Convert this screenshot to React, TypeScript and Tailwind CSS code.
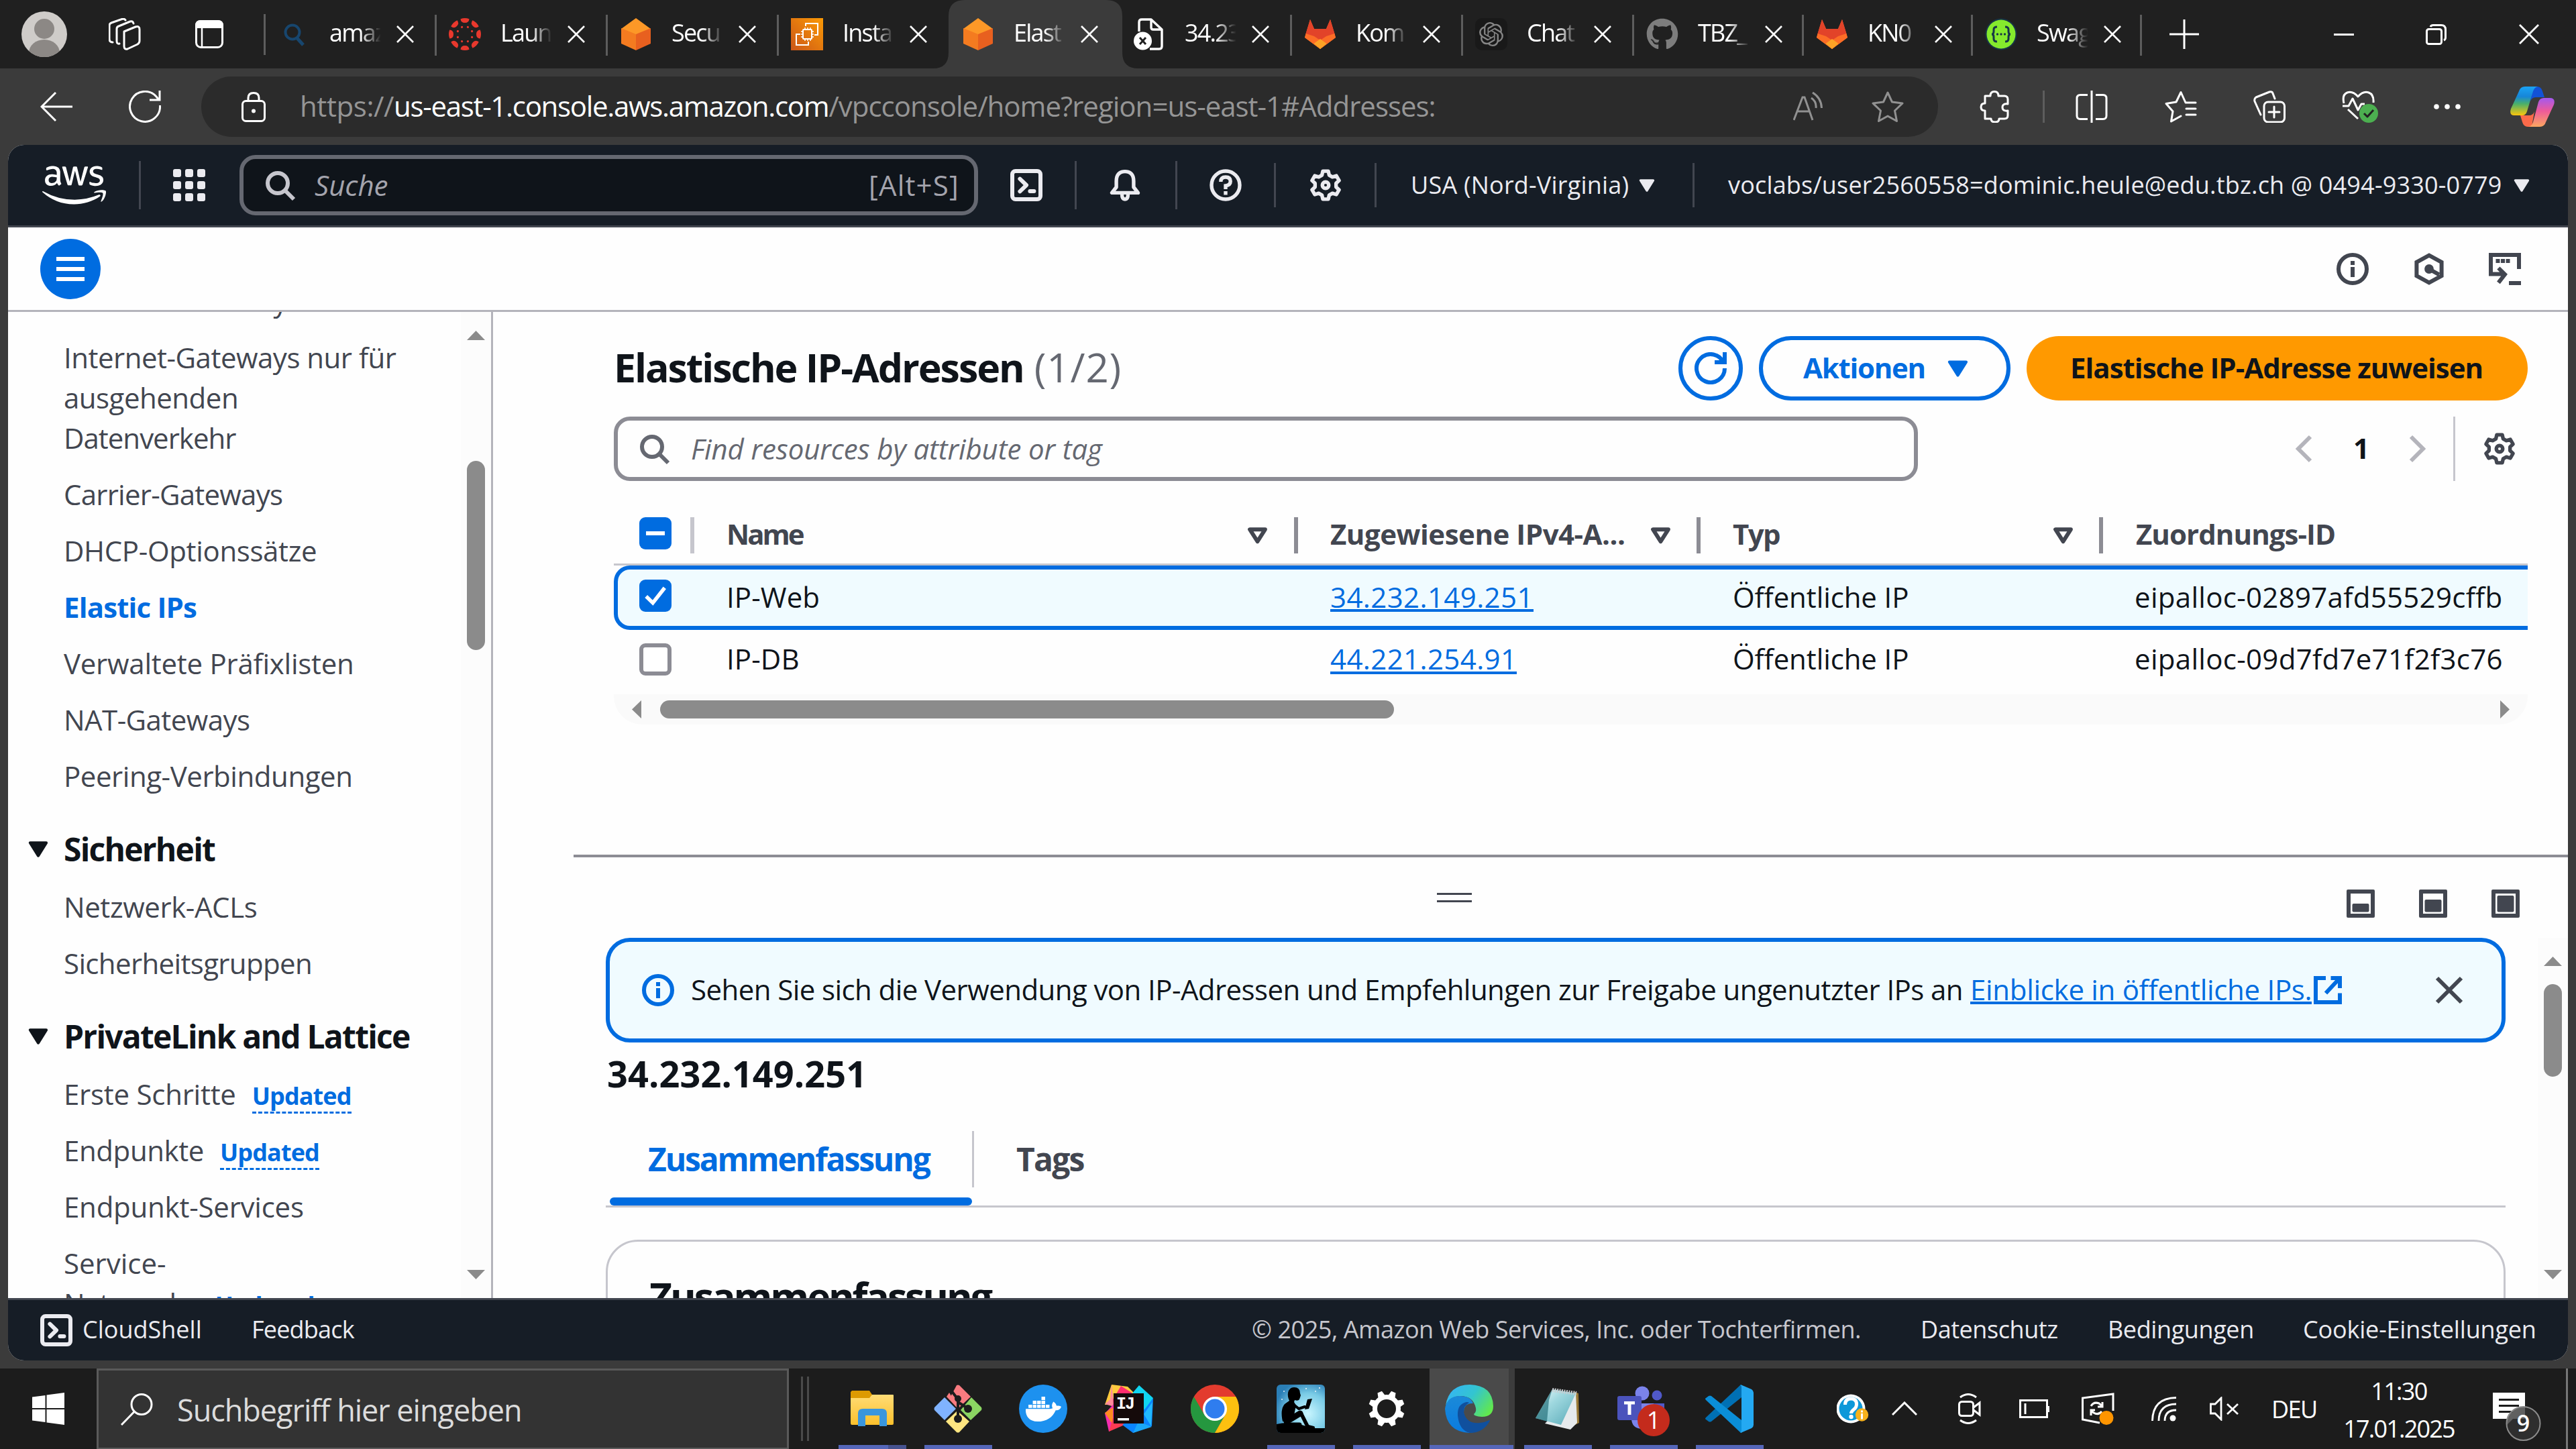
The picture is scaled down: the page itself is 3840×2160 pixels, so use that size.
import type { ReactNode } from 'react';
import { FaAws, FaDocker, FaGithub } from 'react-icons/fa';
import { SiOpenai } from 'react-icons/si';

type P = { className?: string };

/* ---------- shared helpers ---------- */

function Line({ className = '', vb = '0 0 16 16', sw = 2, round, children }: P & { vb?: string; sw?: number; round?: boolean; children: ReactNode }) {
  return (
    <svg viewBox={vb} className={`shrink-0 ${className}`} fill="none" stroke="currentColor" strokeWidth={sw} strokeLinejoin={round ? 'round' : 'miter'} strokeLinecap={round ? 'round' : 'butt'}>
      {children}
    </svg>
  );
}

function gearPath(teeth: number, ro: number, ri: number, wo: number, wi: number) {
  const pts: string[] = [];
  const at = (r: number, deg: number) => `${(8 + r * Math.cos((deg * Math.PI) / 180)).toFixed(2)} ${(8 + r * Math.sin((deg * Math.PI) / 180)).toFixed(2)}`;
  for (let k = 0; k < teeth; k++) {
    const a = (k * 360) / teeth - 90;
    pts.push(at(ri, a - wi), at(ro, a - wo), at(ro, a + wo), at(ri, a + wi));
  }
  return `M${pts.join('L')}Z`;
}

const Gear = ({ className }: P) => (
  <Line className={className} sw={1.8} round>
    <path d={gearPath(6, 7.1, 5.3, 11, 20)} />
    <circle cx="8" cy="8" r="1.6" />
  </Line>
);
const Search = ({ className }: P) => (
  <Line className={className}>
    <circle cx="7" cy="7" r="5" />
    <path d="m15 15-4.5-4.5" />
  </Line>
);
const InfoIcon = ({ className }: P) => (
  <Line className={className}>
    <circle cx="8" cy="8" r="7" />
    <path d="M8 12V7M8 6V4" />
  </Line>
);
const Shell = ({ className }: P) => (
  <Line className={className} round>
    <rect x="1" y="1" width="14" height="14" rx="1.6" />
    <path d="M4.8 4.9 8 8l-3.2 3.1" />
    <path d="M9.8 11h2" />
  </Line>
);
const Caret = ({ className }: P) => (
  <svg viewBox="0 0 10 8" className={`shrink-0 ${className}`}>
    <path d="M1 .8h8L5 7.2z" fill="currentColor" stroke="currentColor" strokeWidth="1.4" strokeLinejoin="round" />
  </svg>
);
const CaretOutline = ({ className }: P) => (
  <svg viewBox="0 0 10 8" className={`shrink-0 ${className}`}>
    <path d="M1.3 1h7.4L5 6.8z" fill="none" stroke="currentColor" strokeWidth="1.9" strokeLinejoin="round" />
  </svg>
);
const Tri = ({ d, className }: P & { d: string }) => (
  <svg viewBox="0 0 10 10" preserveAspectRatio="none" className={`shrink-0 text-[#8b8b8b] ${className}`}>
    <path d={d} fill="currentColor" />
  </svg>
);
const UP = 'M0 10 5 0l5 10z';
const DOWN = 'M0 0h10L5 10z';
const LEFT = 'M10 0v10L0 5z';
const RIGHT = 'M0 0l10 5L0 10z';

/* ---------- favicons ---------- */

const Cube = () => (
  <svg viewBox="0 0 48 48" className="size-12">
    <path d="M24 0 46 16 24 25 2 16z" fill="#fd9827" />
    <path d="M2 15 24 24v24L2 38z" fill="#f47b20" />
    <path d="M46 15 24 24v24l22-10z" fill="#e8601f" />
  </svg>
);
const Canvas = () => (
  <svg viewBox="0 0 48 48" className="size-12" fill="#e8382d">
    {[0, 45, 90, 135, 180, 225, 270, 315].map((a) => (
      <g key={a} transform={`rotate(${a} 24 24)`}>
        <path d="M17.5 1.2Q24-1.2 30.500 1.200Q30 7 24 7T17.500 1.200z" />
        <circle cx="24" cy="12.500" r="1.600" transform="rotate(22.5 24 24)" />
      </g>
    ))}
  </svg>
);
const Gitlab = () => (
  <svg viewBox="0 0 48 48" className="size-12">
    <path d="M24 46 1 29 9 2l6 14h18l6-14 8 27z" fill="#fc6d26" />
    <path d="M9 2l6 14h18l6-14 6.500 21L24 33 2.500 23z" fill="#e24329" />
    <path d="M2.500 23 15 27l9 6 9-6 12.500-4L47 29 24 46 1 29z" fill="#fc6d26" />
    <path d="M24 46 14.500 38 24 31l9.500 7z" fill="#fca326" />
  </svg>
);
const Ec2 = () => (
  <svg viewBox="0 0 48 48" className="size-12">
    <defs>
      <linearGradient id="ec2" x1="0" y1="1" x2="1" y2="0">
        <stop offset="0" stopColor="#cb5618" />
        <stop offset="1" stopColor="#fb9a05" />
      </linearGradient>
    </defs>
    <path d="M0 0h48v48H0z" fill="url(#ec2)" />
    <g fill="none" stroke="#fff" strokeWidth="2">
      <path d="M22 12V8h18v17h-5M14 24H8v16h18v-5" />
      <rect x="18" y="17" width="13" height="14" rx="1" />
      <path d="M21 14v3M25 14v3M29 14v3M21 31v3M25 31v3M29 31v3M15 20h3M15 24h3M15 28h3M31 20h3M31 24h3M31 28h3" strokeWidth="1.500" />
    </g>
  </svg>
);
const BlueSearch = () => (
  <svg viewBox="0 0 48 48" className="size-12" fill="none" stroke="#17466e" strokeWidth="4">
    <circle cx="22" cy="21" r="10.500" />
    <path d="m29 30 9 10" strokeWidth="5" />
  </svg>
);
const FileX = () => (
  <svg viewBox="0 0 48 48" className="size-12" fill="none" stroke="#fff" strokeWidth="3.400" strokeLinejoin="round">
    <path d="M9 20V6q0-4 4-4h14l16 15v25q0 4-4 4H25M27 2v12q0 3 3 3h13" />
    <circle cx="14.500" cy="34" r="13.500" fill="#fff" stroke="none" />
    <path d="m10 29 9 10M19 29l-9 10" stroke="#202020" strokeWidth="3" />
  </svg>
);
const Swagger = () => (
  <svg viewBox="0 0 48 48" className="size-12">
    <circle cx="24" cy="24" r="23.500" fill="#173647" />
    <circle cx="24" cy="24" r="21.500" fill="#85ea2d" />
    <path d="M18 13q-5 0-5 4v3q0 4-3 4 3 0 3 4v3q0 4 5 4M30 13q5 0 5 4v3q0 4 3 4-3 0-3 4v3q0 4-5 4" fill="none" stroke="#173647" strokeWidth="3" />
    <g fill="#173647">
      <circle cx="18.500" cy="24" r="1.700" />
      <circle cx="24" cy="24" r="1.700" />
      <circle cx="29.500" cy="24" r="1.700" />
    </g>
  </svg>
);
const Chat = () => (
  <span className="flex size-12 items-center justify-center rounded-[10px] bg-[#191919] text-[#858585]">
    <SiOpenai className="size-9" />
  </span>
);

const tabs: { label: string; icon: ReactNode; w: string; active?: boolean; noLine?: boolean }[] = [
  { label: 'amaz', icon: <BlueSearch />, w: 'w-[255px]' },
  { label: 'Laun', icon: <Canvas />, w: 'w-[255px]' },
  { label: 'Secu', icon: <Cube />, w: 'w-[255px]' },
  { label: 'Insta', icon: <Ec2 />, w: 'w-[255px]', noLine: true },
  { label: 'Elast', icon: <Cube />, w: 'w-[255px]', active: true, noLine: true },
  { label: '34.23', icon: <FileX />, w: 'w-[255px]' },
  { label: 'Kom', icon: <Gitlab />, w: 'w-[255px]' },
  { label: 'Chat', icon: <Chat />, w: 'w-[255px]' },
  { label: 'TBZ_', icon: <FaGithub className="size-12 text-[#7d7d7d]" />, w: 'w-[253px]' },
  { label: 'KN0', icon: <Gitlab />, w: 'w-[252px]' },
  { label: 'Swag', icon: <Swagger />, w: 'w-[252px]' },
];

const CloseX = ({ className }: P) => (
  <Line className={className} vb="0 0 26 26" sw={2.6}>
    <path d="M1 1l24 24M25 1 1 25" />
  </Line>
);

function TabStrip() {
  return (
    <div className="flex h-[102px] items-center bg-[#202020] text-white">
      <svg viewBox="0 0 68 68" className="ml-8 size-[68px]">
        <clipPath id="av"><circle cx="34" cy="34" r="34" /></clipPath>
        <g clipPath="url(#av)">
          <path d="M0 0h68v68H0z" fill="#cfccc9" />
          <circle cx="34" cy="26" r="15" fill="#8c8885" />
          <ellipse cx="34" cy="62" rx="23" ry="20" fill="#8c8885" />
        </g>
      </svg>
      <Line className="ml-[62px] size-12" vb="0 0 48 48" sw={3} round>
        <path d="M23 20 40 13q6-2 6 4v17q0 3-3 5l-15 7q-5 1-5-4z" />
        <path d="M16 38q-4 1-4-4V16q0-3 3-4L32 5q4-1 5 3" />
        <path d="M6 36q-5 0-5-5V11q0-3 3-4L21 1q3 0 4 2" />
      </Line>
      <svg viewBox="0 0 42 42" className="ml-[81px] size-[42px]">
        <rect x="1.500" y="1.500" width="39" height="39" rx="7" fill="none" stroke="#fff" strokeWidth="3" />
        <path d="M0 12V8q0-8 8-8h26q8 0 8 8v4z" fill="#fff" />
        <path d="M10 12v28" stroke="#fff" strokeWidth="2.500" />
      </svg>
      <span className="ml-[60px] h-[61px] w-[3px] bg-[#5d5d5d]" />
      {tabs.map((t, i) => (
        <div key={i} className={`relative flex h-[102px] shrink-0 items-center ${t.w}`}>
          {t.active && (
            <svg viewBox="0 0 306 102" className="absolute -left-[25px] top-0 h-[102px] w-[306px]">
              <path d="M0 102q23 0 23-24V24Q23 0 47 0h211q24 0 24 24v54q0 24 24 24z" fill="#3b3b3b" />
            </svg>
          )}
          <span className="relative ml-[18px] flex size-12 items-center justify-center">{t.icon}</span>
          <span className="relative ml-[29px] w-[96px] whitespace-nowrap pb-1 text-[36px] leading-[48px] tracking-[-1.8px] [mask-image:linear-gradient(to_right,#000_48%,transparent_80%)]">{t.label}</span>
          <CloseX className="relative ml-[4px] size-[26px]" />
          {!t.noLine && <span className="absolute right-0 top-[22px] h-[61px] w-[3px] bg-[#5d5d5d]" />}
        </div>
      ))}
      <Line className="ml-[41px] size-[44px]" vb="0 0 44 44" sw={3}>
        <path d="M22 0v44M0 22h44" />
      </Line>
      <span className="ml-[201px] h-[3px] w-[30px] bg-white" />
      <Line className="ml-[107px] size-[31px]" vb="0 0 31 31" sw={3}>
        <rect x="1.500" y="7.500" width="22" height="22" rx="3" />
        <path d="M7 4q1-2.500 4-2.500h12q6.500 0 6.500 6.500v12q0 3-2.500 4" />
      </Line>
      <Line className="ml-[108px] size-[30px]" vb="0 0 30 30" sw={2.8}>
        <path d="M1 1l28 28M29 1 1 29" />
      </Line>
    </div>
  );
}

const Copilot = () => (
  <svg viewBox="0 0 66 60" className="ml-[73px] h-[60px] w-[66px] shrink-0">
    <defs>
      <linearGradient id="cp1" x1="0" y1="0" x2="0" y2="1">
        <stop offset="0" stopColor="#1aa3f5" />
        <stop offset=".35" stopColor="#1686d8" />
        <stop offset=".6" stopColor="#4ab06a" />
        <stop offset="1" stopColor="#fbc60c" />
      </linearGradient>
      <linearGradient id="cp2" x1="0" y1="0" x2="0" y2="1">
        <stop offset="0" stopColor="#a259f0" />
        <stop offset=".45" stopColor="#ee5a9a" />
        <stop offset="1" stopColor="#fda760" />
      </linearGradient>
    </defs>
    <path d="M34 0h6q6 0 8 7l3 9H38q-6 0-8 6z" fill="#1252d6" />
    <path d="M32 60h-6q-6 0-8-7l-3-10h13q6 0 8-6z" fill="#fb6a4a" />
    <path d="M13 7q2-7 9-7h19q-5 1-7 7l-9 30q-2 6-7 6H6q-8 0-5-10z" fill="url(#cp1)" />
    <path d="M53 53q-2 7-9 7H27q5-1 7-7l8-30q2-6 8-6h9q9 0 6 10z" fill="url(#cp2)" />
  </svg>
);

function Toolbar() {
  return (
    <div className="flex h-[114px] shrink-0 items-center text-white">
      <Line className="ml-[60px] size-12" vb="0 0 48 48" sw={3}>
        <path d="M48 24H2M23 3 2 24l21 21" />
      </Line>
      <Line className="ml-[84px] size-12" vb="0 0 48 48" sw={3}>
        <path d="M46.500 22A22.500 22.500 0 1 1 41 9l4 5M46 0v14H31" />
      </Line>
      <div className="ml-[60px] flex h-[90px] w-[2589px] items-center rounded-full bg-[#2b2b2b]">
        <Line className="ml-[60px] h-[45px] w-9" vb="0 0 36 45" sw={3}>
          <rect x="1.500" y="13.500" width="33" height="30" rx="5" />
          <path d="M10 13V9q0-7.500 8-7.500T26 9v4" />
          <circle cx="18" cy="28.500" r="3" fill="currentColor" stroke="none" />
        </Line>
        <p className="ml-[51px] w-[2226px] whitespace-nowrap pb-[3px] text-[42px] leading-[60px] tracking-[-1px] text-[#959595]">
          <span className="tracking-[-0.4px]">https://</span>
          <span className="tracking-[-1.3px] text-white">us-east-1.console.aws.amazon.com</span>/vpcconsole/home?region=us-east-1#Addresses:
        </p>
        <Line className="size-[45px] text-[#919191]" vb="0 0 45 45" sw={3}>
          <path d="M1 42 14 8h3l12 34M6 29h19M27 9q8 5 7 15M29 1q13 8 13.500 23" />
        </Line>
        <Line className="ml-[72px] size-12 text-[#919191]" vb="0 0 48 48" sw={3} round>
          <path d="m24 3 6.500 14L46 19 34.500 30l3 15.500L24 38l-13.500 7.500 3-15.500L2 19l15.500-2z" />
        </Line>
      </div>
      <Line className="ml-[62px] size-12" vb="0 0 48 48" sw={3} round>
        <path d="M8 8h8q0-6.500 6-6.500T28 8h9q5 0 5 5v7q-8-1-8 5t8 5v7q0 5-5 5h-8q0 5-6 5t-6-5H8V30q-6 0-6-5.500T8 19z" />
      </Line>
      <span className="ml-[46px] h-12 w-[3px] bg-[#5d5d5d]" />
      <Line className="ml-[46px] size-12" vb="0 0 48 48" sw={3}>
        <path d="M18 6.500H7q-5 0-5 5v26q0 5 5 5h11M30 6.500h11q5 0 5 5v26q0 5-5 5H30M24 0v48" />
      </Line>
      <Line className="ml-[85px] size-12" vb="0 0 48 48" sw={3} round>
        <path d="M46 18H31L24 2.500 17 17 2 19.500 12 31l-2.500 15L24 38M32 27h14M32 36h14" />
      </Line>
      <Line className="ml-[84px] size-12" vb="0 0 48 48" sw={3} round>
        <rect x="16" y="17" width="30.500" height="30" rx="6" />
        <path d="M31 24v16M23 32h16M11 36 2 16q-1-4 2-6L24 2q4-1 5 2l3 8" />
      </Line>
      <svg viewBox="0 0 54 48" className="ml-[84px] h-12 w-[54px] shrink-0" fill="none" stroke="#fff" strokeWidth="3" strokeLinejoin="round">
        <path d="M3 19Q0 6 8 3t16 6q8-9 16-6t7 15M1 23h9l6-11 8 17 5-9h5M9 28l15 14" />
        <circle cx="40" cy="34" r="14" fill="#4caf50" stroke="none" />
        <path d="m33 34 5 5 9-10" stroke="#222" />
      </svg>
      <svg viewBox="0 0 42 10" className="ml-[82px] h-[10px] w-[42px] shrink-0" fill="#fff">
        <circle cx="5" cy="5" r="3.800" />
        <circle cx="21" cy="5" r="3.800" />
        <circle cx="37" cy="5" r="3.800" />
      </svg>
      <Copilot />
    </div>
  );
}

/* ---------- AWS console ---------- */

const Sep = ({ className = '' }: P) => <span className={`h-[72px] w-[3px] shrink-0 bg-[#424650] ${className}`} />;

function AwsHeader() {
  return (
    <div className="flex h-[123px] shrink-0 items-center border-b-[3px] border-[#424650] bg-[#161d26] text-[#ebebf0]">
      <FaAws className="ml-[51px] h-[76px] w-[95px] shrink-0 text-white" />
      <Sep className="ml-[49px]" />
      <svg viewBox="0 0 16 16" className="ml-[48px] size-12 shrink-0" fill="currentColor">
        {[0, 6, 12].map((x) => [0, 6, 12].map((y) => <rect key={`${x}-${y}`} x={x} y={y} width="4" height="4" rx="1" />))}
      </svg>
      <div className="ml-[51px] flex h-[90px] w-[1101px] shrink-0 items-center rounded-[24px] border-[6px] border-[#656871] bg-[#0f141a]">
        <Search className="ml-[30px] size-12 text-[#c6c6cd]" />
        <span className="ml-[28px] flex-1 text-[42px] italic leading-[60px] text-[#a4a4ad]">Suche</span>
        <span className="mr-[22px] text-[42px] leading-[60px] tracking-[1.2px] text-[#a4a4ad]">[Alt+S]</span>
      </div>
      <Shell className="ml-[48px] size-12" />
      <Sep className="ml-[48px]" />
      <Line className="ml-[48px] size-12" sw={1.8} round>
        <path d="M1.500 11.800h13L12.300 9V6Q12.300 1.200 8 1.200T3.700 6v3z" />
        <path d="M6.500 12.500q0 2.500 1.500 2.500t1.500-2.500" />
      </Line>
      <Sep className="ml-[51px]" />
      <Line className="ml-[48px] size-12" sw={1.8}>
        <circle cx="8" cy="8" r="7" />
        <path d="M5.600 6.300Q5.600 4 8 4t2.400 2.100Q10.400 8 8 8.300V10M8 11v1.800" />
      </Line>
      <Sep className="ml-[48px] !h-[66px]" />
      <Gear className="ml-[50px] size-12" />
      <Sep className="ml-[49px] !h-[66px]" />
      <span className="ml-[51px] w-[340px] whitespace-nowrap text-[36px] leading-[48px] tracking-[0.2px]">USA (Nord-Virginia)</span>
      <Caret className="h-[19px] w-[24px]" />
      <Sep className="ml-[56px] !h-[66px]" />
      <span className="ml-[50px] w-[1171px] whitespace-nowrap text-[36px] leading-[48px] tracking-[0.18px]">voclabs/user2560558=dominic.heule@edu.tbz.ch @ 0494-9330-0779</span>
      <Caret className="h-[19px] w-[24px]" />
    </div>
  );
}

function ServiceBar() {
  return (
    <div className="flex h-[126px] shrink-0 items-center border-b-[3px] border-[#b4b4bb] text-[#424650]">
      <span className="ml-[48px] flex size-[90px] items-center justify-center rounded-full bg-[#006ce0]">
        <svg viewBox="0 0 42 36" className="h-9 w-[42px]">
          <path d="M0 0h42v6H0zM0 15h42v6H0zM0 30h42v6H0z" fill="#fff" />
        </svg>
      </span>
      <InfoIcon className="ml-auto size-12" />
      <Line className="ml-[66px] size-12">
        <path d="M8 1.200 14.200 4.600v6.800L8 14.800 1.800 11.400V4.600z" />
        <circle cx="8" cy="8" r="2.300" fill="currentColor" stroke="none" />
        <path d="m8.500 8.300 4.500 2.500" />
      </Line>
      <Line className="ml-[65px] mr-[70px] size-12">
        <path d="M15 8V1H1v9.500h7M4.500 3v2M7 3v2M9.500 3v2M10 15h6M4.800 7.500 8 10.700 4.800 14.800" />
      </Line>
    </div>
  );
}

const Item = ({ children, t }: { children: ReactNode; t: string }) => <p className={`mb-6 whitespace-nowrap text-[42px] leading-[60px] ${t}`}>{children}</p>;
const Updated = ({ className = '' }: P) => (
  <span className={`inline-block border-b-[3px] border-dashed border-[#006ce0] text-[36px] font-bold leading-[47px] tracking-[-0.9px] text-[#006ce0] ${className}`}>Updated</span>
);
const Group = ({ children }: { children: ReactNode }) => (
  <div className="-ml-[53px] mb-[26px] mt-[49px] flex h-[60px] items-center whitespace-nowrap text-[48px] font-bold tracking-[-1.78px] text-[#0f141a]">
    <Caret className="mr-[23px] h-[24px] w-[30px]" />
    <span>{children}</span>
  </div>
);

function Sidebar() {
  return (
    <div className="flex w-[723px] shrink-0 border-r-[3px] border-[#b4b4bb]">
      <div className="flex-1 overflow-hidden">
        <div className="-mt-[46px] ml-[83px] text-[#424650]">
          <Item t="tracking-[-0.45px]">Internet-Gateways</Item>
          <Item t="tracking-[-0.5px]">
            Internet-Gateways nur für
            <br />
            ausgehenden
            <br />
            <span className="tracking-[-1px]">Datenverkehr</span>
          </Item>
          <Item t="tracking-[-0.76px]">Carrier-Gateways</Item>
          <Item t="tracking-[-0.35px]">DHCP-Optionssätze</Item>
          <Item t="tracking-[-0.84px] font-bold text-[#006ce0]">Elastic IPs</Item>
          <Item t="tracking-[-0.25px]">Verwaltete Präfixlisten</Item>
          <Item t="tracking-[-0.56px]">NAT-Gateways</Item>
          <Item t="tracking-[-0.45px]">Peering-Verbindungen</Item>
          <Group>Sicherheit</Group>
          <Item t="tracking-[-0.42px]">Netzwerk-ACLs</Item>
          <Item t="tracking-[-0.64px]">Sicherheitsgruppen</Item>
          <Group>PrivateLink and Lattice</Group>
          <div className="mb-6 flex h-[60px] items-baseline text-[42px] leading-[60px] tracking-[-0.25px]">
            Erste Schritte
            <Updated className="ml-[24px]" />
          </div>
          <div className="mb-6 flex h-[60px] items-baseline text-[42px] leading-[60px] tracking-[-0.4px]">
            Endpunkte
            <Updated className="ml-[24px]" />
          </div>
          <Item t="tracking-[-0.23px]">Endpunkt-Services</Item>
          <p className="text-[42px] leading-[60px]">Service-</p>
          <div className="flex h-[60px] items-baseline text-[42px] leading-[60px] tracking-[-0.8px]">
            Netzwerke
            <Updated className="ml-[24px]" />
          </div>
        </div>
      </div>
      <div className="flex w-[45px] flex-col items-center bg-[#fcfcfc]">
        <Tri d={UP} className="mt-7 h-[14px] w-[27px]" />
        <span className="mt-[180px] h-[282px] w-[27px] rounded-full bg-[#8b8b8b]" />
        <Tri d={DOWN} className="mb-7 mt-auto h-[14px] w-[27px]" />
      </div>
    </div>
  );
}

const rows = [
  { name: 'IP-Web', ip: '34.232.149.251', id: 'eipalloc-02897afd55529cffb' },
  { name: 'IP-DB', ip: '44.221.254.91', id: 'eipalloc-09d7fd7e71f2f3c76' },
];

function Table() {
  const cols = 'grid grid-cols-[120px_900px_600px_600px_1fr]';
  return (
    <div className="w-[2853px]">
      <div className={`${cols} h-[126px] border-b-[3px] border-[#c6c6cd] pt-[54px] text-[42px] font-bold leading-[50px] text-[#424650]`}>
        <div className="flex h-[54px]">
          <span className="ml-[38px] flex size-12 items-center justify-center rounded-[9px] bg-[#006ce0]">
            <span className="mb-[1px] h-[6px] w-[28px] bg-white" />
          </span>
          <span className="ml-auto h-[54px] w-[6px] bg-[#c6c6cd]" />
        </div>
        <div className="flex h-[54px]">
          <span className="ml-[48px] tracking-[-3px]">Name</span>
          <CaretOutline className="ml-auto mr-[39px] mt-[15px] h-[25px] w-[31px]" />
          <span className="h-[54px] w-[6px] bg-[#8c8c94]" />
        </div>
        <div className="flex h-[54px]">
          <span className="ml-[48px] tracking-[-0.48px]">Zugewiesene IPv4-A...</span>
          <CaretOutline className="ml-auto mr-[38px] mt-[15px] h-[25px] w-[31px]" />
          <span className="h-[54px] w-[6px] bg-[#8c8c94]" />
        </div>
        <div className="flex h-[54px]">
          <span className="ml-[48px] tracking-[-1.6px]">Typ</span>
          <CaretOutline className="ml-auto mr-[38px] mt-[15px] h-[25px] w-[31px]" />
          <span className="h-[54px] w-[6px] bg-[#8c8c94]" />
        </div>
        <span className="ml-[49px] tracking-[-0.95px]">Zuordnungs-ID</span>
      </div>
      {rows.map((r, i) => (
        <div
          key={r.ip}
          className={`${cols} h-24 items-start whitespace-nowrap text-[42px] text-[#0f141a] ${i === 0 ? 'rounded-l-[24px] border-y-[6px] border-l-[6px] border-[#006ce0] bg-[#f0fbff] pt-[15px] leading-[51px]' : 'pt-[20px] leading-[46px]'}`}
        >
          {i === 0 ? (
            <span className="ml-[32px] flex size-12 items-center justify-center rounded-[9px] bg-[#006ce0] text-white">
              <Line className="size-[34px]" sw={2.600}>
                <path d="M1.500 8.500 6.200 13 14.500 2.500" />
              </Line>
            </span>
          ) : (
            <span className="ml-[38px] size-12 rounded-[9px] border-[6px] border-[#8c8c94] bg-white" />
          )}
          <span className={i === 0 ? 'ml-[42px] tracking-[0.1px]' : 'ml-[48px] tracking-[0.1px]'}>{r.name}</span>
          <span className={`text-[#006ce0] ${i === 0 ? 'ml-[42px]' : 'ml-[48px]'}`}>
            <span className={`inline-block border-b-[4px] border-[#006ce0] tracking-[0.4px] ${i === 0 ? 'h-[48px]' : 'h-[46px]'}`}>{r.ip}</span>
          </span>
          <span className={i === 0 ? 'ml-[42px] tracking-[-0.1px]' : 'ml-[48px] tracking-[-0.1px]'}>Öffentliche IP</span>
          <span className={`tracking-[0.3px] ${i === 0 ? 'ml-[41px]' : 'ml-[47px]'}`}>{r.id}</span>
        </div>
      ))}
      <div className="flex h-[45px] items-center rounded-b-[42px] bg-[#fafafa]">
        <Tri d={LEFT} className="ml-[27px] h-[27px] w-[14px]" />
        <span className="ml-[28px] h-[27px] w-[1094px] rounded-full bg-[#8b8b8b]" />
        <Tri d={RIGHT} className="ml-auto mr-[27px] h-[27px] w-[14px]" />
      </div>
    </div>
  );
}

function AddressList() {
  return (
    <div className="h-[809px] shrink-0 pl-[180px] pr-[60px] pt-9">
      <div className="flex h-24 items-center">
        <h1 className="whitespace-nowrap pb-[5px] text-[59px] font-bold leading-[72px] tracking-[-2.05px] text-[#0f141a]">Elastische IP-Adressen</h1>
        <span className="ml-[16px] pb-[5px] text-[60px] leading-[72px] tracking-[0.9px] text-[#656871]">(1/2)</span>
        <span className="ml-auto flex size-24 items-center justify-center rounded-full border-[6px] border-[#006ce0] text-[#006ce0]">
          <Line className="size-12">
            <path d="M10 5h5V0" />
            <path d="M15 8a7 7 0 1 1-.5-2.600" />
          </Line>
        </span>
        <span className="ml-6 flex h-24 w-[375px] items-center rounded-full border-[6px] border-[#006ce0] pl-[60px] text-[#006ce0]">
          <span className="w-[215px] pb-[3px] text-[42px] font-bold tracking-[-1.28px]">Aktionen</span>
          <Caret className="h-[25px] w-[31px]" />
        </span>
        <span className="ml-6 flex h-24 w-[747px] items-center whitespace-nowrap rounded-full bg-[#ff9900] pb-[3px] pl-[65px] text-[42px] font-bold tracking-[-1px] text-[#0f141a]">Elastische IP-Adresse zuweisen</span>
      </div>
      <div className="mt-6 flex h-24 items-center text-[#424650]">
        <div className="flex h-24 w-[1944px] shrink-0 items-center rounded-[24px] border-[6px] border-[#8c8c94]">
          <Search className="ml-[30px] size-12 text-[#656871]" />
          <span className="ml-[31px] pb-[2px] text-[42px] italic tracking-[-0.12px] text-[#656871]">Find resources by attribute or tag</span>
        </div>
        <Line className="ml-auto size-12 text-[#b4b4bb]">
          <path d="M11 2 5 8l6 6" />
        </Line>
        <span className="ml-[49px] w-[24px] pb-[2px] text-center text-[42px] font-bold leading-[60px] text-[#0f141a]">1</span>
        <Line className="ml-[47px] size-12 text-[#b4b4bb]">
          <path d="m5 2 6 6-6 6" />
        </Line>
        <span className="ml-[30px] h-24 w-[3px] bg-[#c6c6cd]" />
        <Gear className="ml-[42px] mr-[18px] size-12" />
      </div>
      <Table />
    </div>
  );
}

const PanelIcon = ({ y }: { y: number }) => (
  <svg viewBox="0 0 42 42" className="ml-[66px] size-[42px] text-[#424650]" fill="currentColor">
    <path d="M2 0h38q2 0 2 2v38q0 2-2 2H2q-2 0-2-2V2q0-2 2-2zM6 6v30h30V6z" fillRule="evenodd" />
    <rect x="8.500" y={y} width="25" height={33.500 - y} rx="2" />
  </svg>
);

function SplitPanel() {
  return (
    <div className="ml-[120px] flex flex-1 flex-col overflow-hidden border-t-[4px] border-[#8c8c94]">
      <div className="relative flex h-[120px] shrink-0 justify-end pr-[72px] pt-[48px]">
        <span className="absolute left-[1287px] top-[53px] h-[14px] w-[52px] border-y-[3px] border-[#424650]" />
        <PanelIcon y={21} />
        <PanelIcon y={15} />
        <PanelIcon y={9} />
      </div>
      <div className="flex min-h-0 flex-1">
        <div className="ml-[48px] w-[2832px] shrink-0 overflow-hidden">
          <div className="flex h-[156px] items-center rounded-[36px] border-[6px] border-[#006ce0] bg-[#f0fbff] whitespace-nowrap text-[42px] leading-[60px]">
            <InfoIcon className="ml-[48px] size-12 text-[#006ce0]" />
            <span className="ml-[25px] w-[1907px] pb-[3px] tracking-[-0.57px] text-[#0f141a]">Sehen Sie sich die Verwendung von IP-Adressen und Empfehlungen zur Freigabe ungenutzter IPs an</span>
            <span className="-mt-[6px] h-[48px] border-b-[4px] border-[#006ce0] leading-[51px] tracking-[-0.3px] text-[#006ce0]">Einblicke in öffentliche IPs.</span>
            <Line className="size-12 text-[#006ce0]">
              <path d="M9.500 2H14v5M7 9.500 13.500 2.500M14 9.500V14H2V2h5" />
            </Line>
            <Line className="ml-auto mr-[54px] size-12 text-[#424650]">
              <path d="m2 2 12 12M14 2 2 14" />
            </Line>
          </div>
          <p className="ml-[2px] mt-[10px] h-[72px] text-[54px] font-bold leading-[72px] tracking-[0.1px] text-[#0f141a]">34.232.149.251</p>
          <div className="mt-[50px] flex h-[114px] border-b-[3px] border-[#c6c6cd] text-[48px] font-bold">
            <div className="flex w-[546px] flex-col pl-[6px]">
              <span className="ml-[57px] mt-[10px] leading-[64px] tracking-[-2.15px] text-[#006ce0]">Zusammenfassung</span>
              <span className="mt-auto h-3 rounded-[6px] bg-[#006ce0]" />
            </div>
            <span className="h-[84px] w-[3px] bg-[#c6c6cd]" />
            <span className="ml-[63px] mt-[10px] leading-[64px] tracking-[-1.8px] text-[#424650]">Tags</span>
          </div>
          <div className="mt-[48px] h-[300px] rounded-[48px] border-[3px] border-[#c6c6cd] pl-[62px] pt-[45px]">
            <h2 className="text-[59px] font-bold leading-[72px] tracking-[-3.1px] text-[#0f141a]">Zusammenfassung</h2>
          </div>
        </div>
        <div className="ml-auto flex w-[45px] flex-col items-center bg-[#fcfcfc]">
          <Tri d={UP} className="mt-7 h-[14px] w-[27px]" />
          <span className="mt-[27px] h-[138px] w-[27px] rounded-full bg-[#8b8b8b]" />
          <Tri d={DOWN} className="mb-7 mt-auto h-[14px] w-[27px]" />
        </div>
      </div>
    </div>
  );
}

function AwsFooter() {
  return (
    <div className="relative flex h-[93px] shrink-0 items-center whitespace-nowrap border-t-[3px] border-[#424650] bg-[#161d26] text-[36px] leading-[48px] text-[#ebebf0]">
      <Shell className="ml-[48px] size-12" />
      <span className="ml-[15px] w-[252px] pb-[2px]">CloudShell</span>
      <span className="pb-[2px] tracking-[-0.8px]">Feedback</span>
      <span className="ml-auto w-[997px] pb-[2px] tracking-[-0.45px] text-[#c6c6cd]">© 2025, Amazon Web Services, Inc. oder Tochterfirmen.</span>
      <span className="w-[279px] pb-[2px] tracking-[-0.45px]">Datenschutz</span>
      <span className="w-[291px] pb-[2px] tracking-[-0.4px]">Bedingungen</span>
      <span className="w-[395px] pb-[2px] tracking-[-0.18px]">Cookie-Einstellungen</span>
    </div>
  );
}

/* ---------- taskbar ---------- */

function Slot({ children, bar, dim, active }: { children: ReactNode; bar?: boolean; dim?: boolean; active?: boolean }) {
  return (
    <div className={`relative flex h-[120px] w-[127.800px] shrink-0 items-center justify-center ${active ? 'border-r-[9px] border-[#3c3c3c] bg-[#4a4a4a]' : ''}`}>
      {children}
      {bar && (
        <span className={`absolute bottom-0 flex h-[6px] bg-[#5566b9] ${active ? 'left-0 w-[125px]' : 'left-[14px] w-[101px]'}`}>{dim && <span className="ml-auto w-[27px] bg-[#46528f]" />}</span>
      )}
    </div>
  );
}

const Explorer = () => (
  <svg viewBox="0 0 64 54" className="h-[54px] w-16">
    <defs>
      <linearGradient id="fo" x1="0" y1="0" x2="0" y2="1">
        <stop offset="0" stopColor="#ffdc76" />
        <stop offset="1" stopColor="#fcc02c" />
      </linearGradient>
    </defs>
    <path d="M2 0h26l4 6v8H0V2z" fill="#dd9a02" />
    <path d="M0 11h28l4-5h31q1 0 1 1v42q0 2-2 2H2q-2 0-2-2z" fill="url(#fo)" />
    <path d="M11 53V34q0-7 7-7h29q7 0 7 7v19H43V37H22v16z" fill="#3a96dd" />
  </svg>
);
const GitIcon = () => (
  <svg viewBox="0 0 72 72" className="size-[72px]">
    <path d="M34 1q2-1 4 0l17 17-18 17-7-8-5-9z" fill="#f97b80" />
    <path d="m23 12 14 23-3-1L19 18z" fill="#f97b80" />
    <path d="M16 19 33 36 16 53 1 38q-1-2 0-4z" fill="#80b3ff" />
    <path d="m56 19 15 15q1 2 0 4L55 53 40 38z" fill="#8bd562" />
    <path d="M35 39 53 55 38 71q-2 1-4 0L18 55z" fill="#ffe680" />
    <path d="M26 9 36 22v28M36 26l14 9" fill="none" stroke="#1c1c1c" strokeWidth="4" />
    <g fill="#1c1c1c">
      <circle cx="36" cy="21" r="5" />
      <circle cx="36" cy="51" r="6" />
      <circle cx="51" cy="36" r="6" />
    </g>
  </svg>
);
const DockerIcon = () => (
  <span className="flex size-[72px] items-center justify-center rounded-full bg-[#1d91ef] text-white">
    <FaDocker className="size-[53px]" />
  </span>
);
const Idea = () => (
  <svg viewBox="0 0 72 72" className="size-[72px]">
    <path d="M10 0 34 3 44 13 30 30 0 30z" fill="#ffc93e" />
    <path d="M10 0 8 22 0 29l14 4z" fill="#ff8a9a" />
    <path d="M24 2 40 12 42 50 14 46 12 22z" fill="#ff2d6f" />
    <path d="M0 43 14 28l18 26L6 70z" fill="#f62db0" />
    <path d="M0 42 12 34v26z" fill="#ff8a1f" />
    <path d="M12 50 34 58 6 70z" fill="#ff3b52" />
    <path d="M51 1 72 20 60 40 40 14z" fill="#10d5f0" />
    <path d="m72 20-2 42-28 10-16-12 34-24z" fill="#0a84ff" />
    <path d="m58 44 13-18-2 36z" fill="#21b8ff" />
    <path d="m42 72 28-9-20-8z" fill="#1aa6f7" />
    <path d="M13 13h45v45H13z" fill="#150a0a" />
    <path d="M19 50h17v3.500H19z" fill="#fff" />
    <text x="17" y="36" fontFamily="Liberation Mono" fontWeight="700" fontSize="25" letterSpacing="-2" fill="#fff">IJ</text>
  </svg>
);
const Chrome = () => (
  <svg viewBox="0 0 72 72" className="size-[72px]">
    <circle cx="36" cy="36" r="36" fill="#e33b2e" />
    <path d="M4.800 18A36 36 0 0 0 36 72L51.600 45 36 36 20.400 45z" fill="#25973f" />
    <path d="M36 72A36 36 0 0 0 67.200 18H36l15.600 27z" fill="#fdc010" />
    <circle cx="36" cy="36" r="18" fill="#fff" />
    <circle cx="36" cy="36" r="14.500" fill="#2f7def" />
  </svg>
);
const Kindle = () => (
  <svg viewBox="0 0 72 72" className="size-[72px]">
    <defs>
      <radialGradient id="ki" cx=".65" cy=".6" r=".7">
        <stop offset="0" stopColor="#c9f6ff" />
        <stop offset=".6" stopColor="#79cbe6" />
        <stop offset="1" stopColor="#2a7eb6" />
      </radialGradient>
      <clipPath id="kc"><rect width="72" height="72" rx="6" /></clipPath>
    </defs>
    <g clipPath="url(#kc)">
      <path d="M0 0h72v72H0z" fill="url(#ki)" />
      <g stroke="#000" strokeLinecap="round" strokeLinejoin="round" fill="none">
        <path d="M15 55 35 43" strokeWidth="9" />
        <path d="m36 42 10 20" strokeWidth="5.500" />
        <path d="m47 62 8 2" strokeWidth="4" />
        <path d="M14 60h20" strokeWidth="7" />
        <path d="m22 27 11 9 9-3" strokeWidth="4" />
      </g>
      <path d="M17 12q2-8 9-8 9 0 9 9l1 3-2 6q-2 3-7 1l-1 3 3 5-5 24H9q-4-18 3-26l7-5q-3-6-2-12z" fill="#000" />
      <path d="m46 22 7-1-5 15-6 1z" fill="#000" />
      <path d="M0 59q16-4 34 0 12 4 24 6h14v7H0z" fill="#000" />
      <g fill="#fff">
        <circle cx="44" cy="6" r="1" />
        <circle cx="58" cy="10" r=".9" />
        <circle cx="11" cy="10" r=".9" />
        <circle cx="64" cy="5" r="1" />
        <circle cx="8" cy="22" r=".9" />
      </g>
    </g>
  </svg>
);
const SolidGear = () => (
  <svg viewBox="0 0 54 54" className="size-[54px]" fill="#fff">
    <circle cx="27" cy="27" r="17.500" fill="none" stroke="#fff" strokeWidth="7" />
    {[22.5, 67.5, 112.5, 157.5, 202.5, 247.5, 292.5, 337.5].map((a) => (
      <path key={a} d="M21.500 8 23.500 0h7l2 8z" transform={`rotate(${a} 27 27)`} />
    ))}
  </svg>
);
const Edge = () => (
  <svg viewBox="0 0 72 72" className="size-[72px]">
    <defs>
      <linearGradient id="e1" x1="0" y1=".2" x2="1" y2=".7">
        <stop offset="0" stopColor="#35b4f5" />
        <stop offset=".5" stopColor="#33c5d0" />
        <stop offset="1" stopColor="#62e84c" />
      </linearGradient>
      <linearGradient id="e2" x1="0" y1="0" x2="0" y2="1">
        <stop offset="0" stopColor="#1b8ad8" />
        <stop offset="1" stopColor="#0a7be0" />
      </linearGradient>
    </defs>
    <path d="M1 31Q6 0 37 0q34 1 35 32 0 16-17 16-12-1-12-4 4-3 3-9Q42 17 23 17 8 17 1 31z" fill="url(#e1)" />
    <path d="M0 36Q3 17 22 17q16 0 20 11-14-1-14 14 2 20 22 20-4 10-14 10Q2 70 0 36z" fill="url(#e2)" />
    <path d="M36 27q-8 4-8 14 4 18 24 16 8-1 14-4 1 0 1 1-10 18-30 18-16-4-18-26Q18 29 32 26q3 0 4 1z" fill="#10509e" />
  </svg>
);
const Notepad = () => (
  <svg viewBox="0 0 66 62" className="h-[62px] w-[66px]">
    <defs>
      <linearGradient id="np" x1="0" y1="0" x2="1" y2="1">
        <stop offset="0" stopColor="#f2fbfc" />
        <stop offset=".4" stopColor="#9fd8df" />
        <stop offset="1" stopColor="#57a9b7" />
      </linearGradient>
    </defs>
    <path d="m58 6 6 2 1 44-6 3z" fill="#9a7a36" />
    <path d="m60 6 2 46-10 10-38-9z" fill="#e6eaec" />
    <path d="m25 2 35 6-22 47L0 45z" fill="url(#np)" />
    <path d="M25 2 0 45l17 5 3-32z" fill="#1d6a74" opacity=".65" />
    <path d="m25 3 36 5" stroke="#c8cdd0" strokeWidth="6" strokeDasharray="2 1.500" />
  </svg>
);
const Teams = () => (
  <svg viewBox="0 0 78 78" className="mt-[6px] h-[78px] w-[78px]">
    <circle cx="37" cy="13" r="10.500" fill="#7b83eb" />
    <circle cx="59" cy="16" r="7.500" fill="#5059c9" />
    <path d="M50 28h20v18q0 12-12 12-8 0-10-6z" fill="#5059c9" />
    <path d="M22 28h32v24q0 14-16 14-17 0-17-16z" fill="#7b83eb" />
    <rect y="17" width="36" height="36" rx="3" fill="#4b53bc" />
    <path d="M10 25h16v4.500h-5.500V45h-5V29.500H10z" fill="#fff" />
    <circle cx="54" cy="53" r="24" fill="#c42b1c" />
    <text x="54" y="66" textAnchor="middle" fontFamily="Open Sans" fontSize="36" fill="#fff">1</text>
  </svg>
);
const Code = () => (
  <svg viewBox="0 0 72 72" className="size-[72px]">
    <path d="M1 49q-2 2 0 3l4 3q2 1 4 0L54 19V0q-1 0-2 1z" fill="#0070b4" />
    <path d="M1 23q-2-2 0-3l4-3q2-1 4 0l45 36v19q-1 0-2-1z" fill="#0a8ed8" />
    <path d="M52 72q2 0 3-1l14-6q3-2 3-5V12q0-3-3-5L55 1q-2-1-3 0 2 0 2 3v64q0 3-2 4z" fill="#24a9f2" />
  </svg>
);

function Tray() {
  return (
    <div className="ml-auto flex h-[120px] w-[1102px] shrink-0 items-center text-white">
      <svg viewBox="0 0 48 44" className="h-11 w-12 shrink-0">
        <circle cx="21" cy="22" r="21.500" fill="#fff" />
        <circle cx="21" cy="22" r="17.500" fill="#0d98d9" />
        <path d="M12.500 16q0-9 8.500-9t8.500 8q0 5-4 8t-4 6" fill="none" stroke="#fff" strokeWidth="5" />
        <circle cx="21.500" cy="34" r="3.200" fill="#fff" />
        <circle cx="37.500" cy="31" r="9.700" fill="#f7b11b" />
        <path d="M37.500 24.500v3M37.500 29v8.500" stroke="#fff" strokeWidth="3" />
      </svg>
      <Line className="ml-[34px] h-[22px] w-[38px]" vb="0 0 38 22" sw={3}>
        <path d="M1 20 19 2l18 18" />
      </Line>
      <Line className="ml-[61px] h-[46px] w-[34px]" vb="0 0 34 46" sw={3}>
        <rect x="1.500" y="12.500" width="21" height="21" rx="4" />
        <path d="M23 21 32 14v18l-9-7M3 6q12-9 24 0M3 40q12 9 24 0" />
      </Line>
      <Line className="ml-[57px] h-[28px] w-[45px]" vb="0 0 45 28" sw={3}>
        <path d="M1.500 1.500h40v25h-40zM9 6v16M43.500 10v9" />
      </Line>
      <svg viewBox="0 0 50 48" className="ml-[48px] h-12 w-[50px] shrink-0" fill="none" stroke="#fff" strokeWidth="3">
        <path d="M47 27V2L1.500 8v32L27 45" />
        <path d="M14 20q4-7 12-4l5 4M31 14v7h-7M30 28q-5 6-12 2l-4-3M14 34v-8h6" />
        <circle cx="37" cy="37.500" r="10.500" fill="#ff9500" stroke="none" />
      </svg>
      <svg viewBox="0 0 37 37" className="ml-[54px] size-[37px] shrink-0" fill="none" stroke="#fff" strokeWidth="2.800">
        <path d="M37 1.500Q2 2 1.500 36M37 11Q11 11 11 36M37 20Q20 20 20 36" />
        <circle cx="32" cy="32" r="4.500" fill="#fff" stroke="none" />
      </svg>
      <Line className="ml-[50px] h-[36px] w-[43px]" vb="0 0 43 36" sw={2.800}>
        <path d="M17 2v32L8 25H1.500V11H8zM26 11l16 15M42 11 26 26" />
      </Line>
      <span className="ml-[49px] w-[91px] pt-[2px] text-[36px] leading-[48px] tracking-[-1.56px]">DEU</span>
      <div className="flex h-[120px] w-[198px] flex-col items-center pt-[10px] text-[36px] leading-[48px]">
        <span className="tracking-[-1.7px]">11:30</span>
        <span className="mt-[8px] tracking-[-1.8px]">17.01.2025</span>
      </div>
      <svg viewBox="0 0 72 72" className="ml-[41px] mt-[24px] size-[72px] shrink-0">
        <path d="M0 0h48v39H30L21 48v-9H0z" fill="#fff" />
        <path d="M9 10.500h30M9 19.500h30M9 28.500h20" stroke="#1c1c1c" strokeWidth="3" />
        <circle cx="45.500" cy="46" r="25" fill="#333" fillOpacity=".78" stroke="#8c8c8c" strokeWidth="2" />
        <text x="45.500" y="58" textAnchor="middle" fontFamily="Open Sans" fontWeight="600" fontSize="34" fill="#fff">9</text>
      </svg>
      <span className="ml-auto mr-[12px] h-[120px] w-[3px] bg-[#777]" />
    </div>
  );
}

function Taskbar() {
  return (
    <div className="flex h-[120px] shrink-0 items-center bg-[#1c1c1c]">
      <svg viewBox="0 0 48 48" className="mx-12 size-12 shrink-0" fill="#fff">
        <path d="M0 6.500 19.500 4v19H0zM21.500 3.500 48 0v23H21.500zM0 25h19.500v19L0 41.500zM21.500 25H48v23l-26.500-3.500z" />
      </svg>
      <div className="flex h-[120px] w-[1032px] shrink-0 items-center border-[3px] border-b-[2px] border-[#5a5a5a] bg-[#333]">
        <Line className="ml-[33px] size-12 text-white" vb="0 0 48 48" sw={3}>
          <circle cx="31" cy="16.500" r="15" />
          <path d="M20 27.500 1 47" />
        </Line>
        <span className="ml-[36px] pt-[3px] text-[45px] leading-[60px] tracking-[-1.02px] text-[#dcdcdc]">Suchbegriff hier eingeben</span>
      </div>
      <span className="ml-[18px] h-24 w-[12px] shrink-0 border-x-[3px] border-[#4a4a4a]" />
      <div className="ml-[30px] flex">
        <Slot bar dim><Explorer /></Slot>
        <Slot bar><GitIcon /></Slot>
        <Slot><DockerIcon /></Slot>
        <Slot><Idea /></Slot>
        <Slot><Chrome /></Slot>
        <Slot bar><Kindle /></Slot>
        <Slot bar><SolidGear /></Slot>
        <Slot bar active><Edge /></Slot>
        <Slot bar><Notepad /></Slot>
        <Slot bar><Teams /></Slot>
        <Slot bar><Code /></Slot>
      </div>
      <Tray />
    </div>
  );
}

export default function App() {
  return (
    <div className="flex h-[2160px] w-[3840px] flex-col overflow-hidden bg-[#3b3b3b] font-['Open_Sans','Noto_Sans',sans-serif]">
      <TabStrip />
      <Toolbar />
      <div className="mx-3 mb-3 flex h-[1812px] shrink-0 flex-col overflow-hidden rounded-[24px] bg-[#fefefe]">
        <AwsHeader />
        <ServiceBar />
        <div className="flex min-h-0 flex-1 overflow-hidden">
          <Sidebar />
          <div className="flex min-w-0 flex-1 flex-col">
            <AddressList />
            <SplitPanel />
          </div>
        </div>
        <AwsFooter />
      </div>
      <Taskbar />
    </div>
  );
}
